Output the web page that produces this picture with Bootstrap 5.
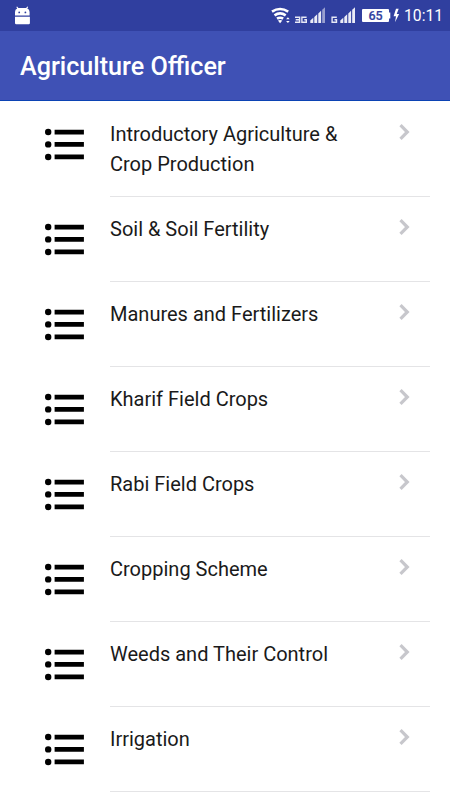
<!DOCTYPE html>
<html lang="en">
<head>
<meta charset="utf-8">
<meta name="viewport" content="width=device-width, initial-scale=1">
<title>Agriculture Officer</title>
<link href="https://cdn.jsdelivr.net/npm/bootstrap@5.3.0/dist/css/bootstrap.min.css" rel="stylesheet">
<style>
body { font-family: Roboto, sans-serif; height: 800px; color: #1a1a1a; }
svg { display: block; flex: none; }
.status-bar { height: 31px; background: #303f9f; }
.clock { font-size: 15.7px; line-height: 32px; width: 41px; white-space: nowrap; color: #fff; }
.app-bar { height: 70px; background: #3f51b5; border-bottom: 1px solid #0c43b4; padding: 2px 20px 0; }
.app-title { font-size: 25.15px; font-weight: 500; line-height: 30px; }
.topics { padding-top: 1px; }
.topic { padding-left: 44px; padding-right: 20px; }
.topic-icon { margin-top: 26px; width: 66px; }
.topic-body { min-height: 85px; padding: 17px 19px 17px 0; border-bottom: 1px solid #e4e4e6; }
.topic:first-child .topic-body { height: 95px; }
.topic-name { font-size: 20px; line-height: 30px; max-width: 250px; }
.chevron { margin-top: 4px; }
</style>
<script src="https://cdn.jsdelivr.net/npm/bootstrap@5.3.0/dist/js/bootstrap.bundle.min.js"></script>
</head>
<body class="bg-white overflow-hidden">
<svg width="0" height="0" class="position-absolute" aria-hidden="true">
  <symbol id="list" viewBox="0 0 41 34">
    <circle cx="4.2" cy="4" r="3.2"/><circle cx="4.2" cy="16.4" r="3.2"/><circle cx="4.2" cy="29" r="3.2"/>
    <path d="M10.6 1.7h29.3v4.7H10.6zM10.6 14.1h29.3v4.7H10.6zM10.6 26.6h29.3v4.7H10.6z"/>
  </symbol>
  <symbol id="next" viewBox="0 0 12 18">
    <path d="M1.5 2.2 8.3 9 1.5 15.8" fill="none" stroke="#c7c7cc" stroke-width="3.2"/>
  </symbol>
</svg>
<header>
  <div class="status-bar d-flex">
    <svg width="260" height="31" viewBox="0 0 260 31" fill="#fff">
      <path d="M15 15.6V12q0-2.8 2.2-3.6L16.3 7l.8-.5 1.3 1.6h7.7l1.3-1.6.8.5-.9 1.4q2.3.8 2.3 3.6v3.6z"/>
      <path d="M15 16.7h14.9v6.4q0 1.2-1.2 1.2H16.2q-1.2 0-1.2-1.2z"/>
      <circle cx="19.2" cy="12.4" r=".9" fill="#303f9f"/><circle cx="25.4" cy="12.4" r=".9" fill="#303f9f"/>
    </svg>
    <svg width="144" height="31" viewBox="260 0 144 31" fill="#fff">
      <g fill="none" stroke="#fff" stroke-width="2.6">
        <path d="M272 11.7q8.1-5.4 16.2 0M274.5 15.3q5.6-3.8 11.2 0M277 18.7q3.1-2 6.2 0"/>
      </g>
      <path d="m277.9 20.6q2.2-1 4.4 0l-2.2 2.6z"/>
      <path d="m286.1 19.2 1.8-2 1.8 2zM286.1 21h3.6l-1.8 2z"/>
      <g fill="none" stroke="#e6e8f6" stroke-width="1.4">
        <path d="M295 17.2h4.6v5H295M295.7 19.7h3.9M306.6 17.2h-4.7v5h4.4v-2.5h-2M336.8 17.2h-4.7v5h4.4v-2.5h-2"/>
      </g>
      <path d="M310.3 22.9v-2.4l3-2.7v5.1zM314.3 22.9V17l2.9-2.7v8.6zM318.3 22.9v-9.5l2.8-2.7v12.2z" opacity=".9"/>
      <path d="M322.2 22.9V9.8l2.8-2.5v15.6z" opacity=".5"/>
      <path d="M340.3 22.9v-2.4l3-2.7v5.1zM344.3 22.9V17l2.9-2.7v8.6zM348.3 22.9v-9.5l2.8-2.7v12.2zM352.2 22.9V9.8l2.8-2.5v15.6z" opacity=".9"/>
      <path d="M363 9h25q1 0 1 1v2.5h1.3v6H389V21q0 1-1 1h-25q-1 0-1-1V10q0-1 1-1z"/>
      <text x="375.6" y="20" text-anchor="middle" font-family="Roboto, sans-serif" font-size="12.5" font-weight="500" fill="#303f9f" stroke="#303f9f" stroke-width=".2">65</text>
      <path d="m396 8.8-2.4 7.4h2.4l-1 6 4.1-8.2h-2.4l2-5.2z"/>
    </svg>
    <div class="clock">10:11</div>
  </div>
  <div class="app-bar d-flex align-items-center text-white">
    <h1 class="app-title mb-0">Agriculture Officer</h1>
  </div>
</header>
<main class="topics">
  <div class="topic d-flex">
    <svg class="topic-icon" width="66" height="34" viewBox="0 0 66 34"><use href="#list" width="41" height="34"/></svg>
    <div class="topic-body d-flex justify-content-between flex-grow-1"><div class="topic-name">Introductory Agriculture &amp; Crop Production</div><svg class="chevron" width="12" height="18"><use href="#next"/></svg></div>
  </div>
  <div class="topic d-flex">
    <svg class="topic-icon" width="66" height="34" viewBox="0 0 66 34"><use href="#list" width="41" height="34"/></svg>
    <div class="topic-body d-flex justify-content-between flex-grow-1"><div class="topic-name">Soil &amp; Soil Fertility</div><svg class="chevron" width="12" height="18"><use href="#next"/></svg></div>
  </div>
  <div class="topic d-flex">
    <svg class="topic-icon" width="66" height="34" viewBox="0 0 66 34"><use href="#list" width="41" height="34"/></svg>
    <div class="topic-body d-flex justify-content-between flex-grow-1"><div class="topic-name">Manures and Fertilizers</div><svg class="chevron" width="12" height="18"><use href="#next"/></svg></div>
  </div>
  <div class="topic d-flex">
    <svg class="topic-icon" width="66" height="34" viewBox="0 0 66 34"><use href="#list" width="41" height="34"/></svg>
    <div class="topic-body d-flex justify-content-between flex-grow-1"><div class="topic-name">Kharif Field Crops</div><svg class="chevron" width="12" height="18"><use href="#next"/></svg></div>
  </div>
  <div class="topic d-flex">
    <svg class="topic-icon" width="66" height="34" viewBox="0 0 66 34"><use href="#list" width="41" height="34"/></svg>
    <div class="topic-body d-flex justify-content-between flex-grow-1"><div class="topic-name">Rabi Field Crops</div><svg class="chevron" width="12" height="18"><use href="#next"/></svg></div>
  </div>
  <div class="topic d-flex">
    <svg class="topic-icon" width="66" height="34" viewBox="0 0 66 34"><use href="#list" width="41" height="34"/></svg>
    <div class="topic-body d-flex justify-content-between flex-grow-1"><div class="topic-name">Cropping Scheme</div><svg class="chevron" width="12" height="18"><use href="#next"/></svg></div>
  </div>
  <div class="topic d-flex">
    <svg class="topic-icon" width="66" height="34" viewBox="0 0 66 34"><use href="#list" width="41" height="34"/></svg>
    <div class="topic-body d-flex justify-content-between flex-grow-1"><div class="topic-name">Weeds and Their Control</div><svg class="chevron" width="12" height="18"><use href="#next"/></svg></div>
  </div>
  <div class="topic d-flex">
    <svg class="topic-icon" width="66" height="34" viewBox="0 0 66 34"><use href="#list" width="41" height="34"/></svg>
    <div class="topic-body d-flex justify-content-between flex-grow-1"><div class="topic-name">Irrigation</div><svg class="chevron" width="12" height="18"><use href="#next"/></svg></div>
  </div>
</main>
</body>
</html>
